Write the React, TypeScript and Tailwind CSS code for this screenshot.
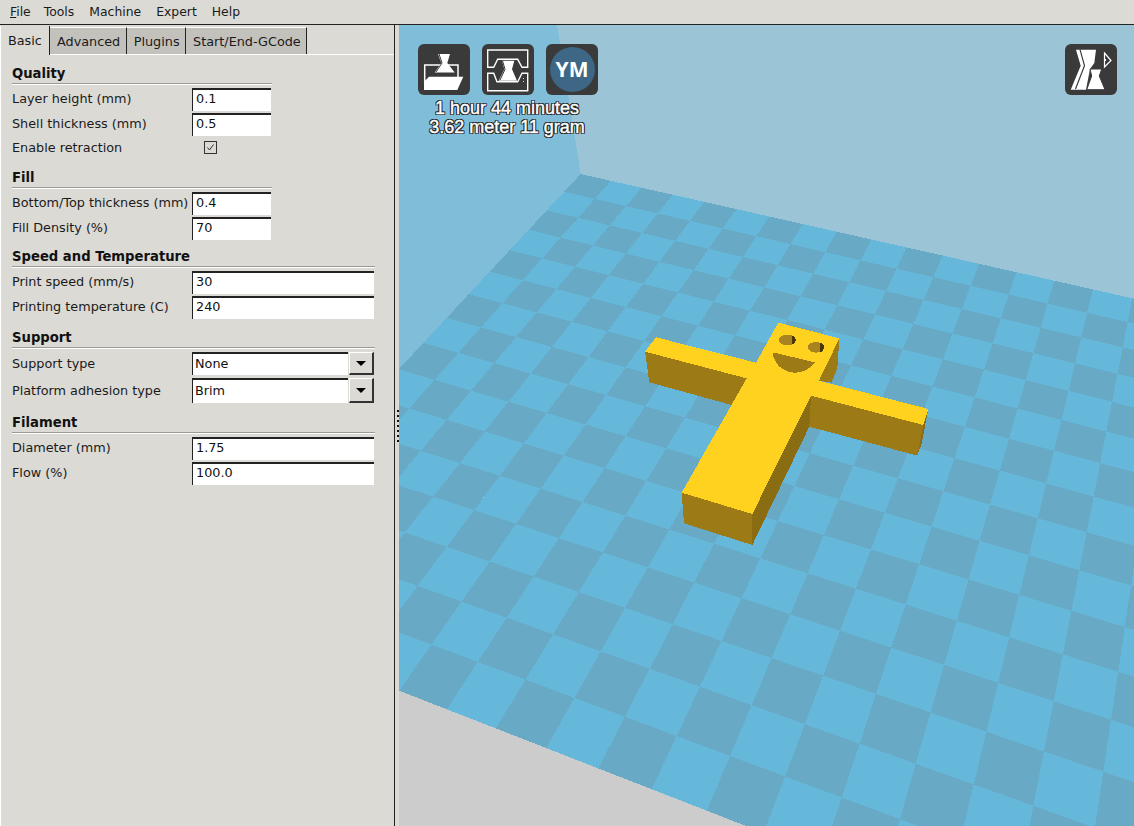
import React from 'react';

// floor homography, measured off the screenshot (u along the back edge, v towards the viewer)
function project(u: number, v: number) {
  const w = 1 - 0.008367 * u - 0.02221 * v;
  return [(25.001 * u - 29.07 * v + 580.7) / w, (5.273 * u + 13.5 * v + 174) / w];
}

function cellPoints(u: number, v: number) {
  return [project(u, v), project(u + 1, v), project(u + 1, v + 1), project(u, v + 1)]
    .map((p) => `${p[0].toFixed(1)},${p[1].toFixed(1)}`)
    .join(' ');
}

const cells: { u: number; v: number }[] = [];
for (let v = 0; v < 16; v++) {
  for (let u = 0; u < 26; u++) {
    cells.push({ u, v });
  }
}

function Viewport() {
  return (
    <svg className="absolute inset-0 h-full w-full" viewBox="399 25 735 801" shapeRendering="crispEdges">
      <rect x="399" y="25" width="735" height="801" fill="#cccccc" />
      <polygon points="557,25 1134,25 1134,300 580.7,174" fill="#9bc4d7" />
      <polygon points="399,25 557,25 580.7,174 399,372" fill="#80bdd9" />
      {cells.map((c) => (
        <polygon
          key={`${c.u}-${c.v}`}
          points={cellPoints(c.u, c.v)}
          fill={(c.u + c.v) % 2 === 0 ? '#68aac6' : '#66b8da'}
        />
      ))}
      {/* printed model, coordinates taken from a 3x crop */}
      <g transform="translate(630 310) scale(0.33333)">
        <polygon points="45,125 350,205 305,285 58,217" fill="#9c7a16" />
        <polygon points="628,85 622,175 605,218 567,212" fill="#9c7a16" />
        <polygon points="543,257 880,345 862,437 538,350" fill="#9c7a16" />
        <polygon points="895,297 880,345 862,437 875,400" fill="#8a6c13" />
        <polygon points="155,548 367,612 367,705 162,640" fill="#9c7a16" />
        <polygon points="367,612 543,257 538,350 367,705" fill="#8a6c13" />
        <polygon
          points="445,38 628,85 567,212 895,297 880,345 543,257 367,612 155,548 350,205 45,125 78,82 378,158"
          fill="#ffd21f"
        />
        <ellipse cx="472" cy="90" rx="25" ry="16" fill="#a98320" />
        <path d="M487 77 Q497 80 497 90 Q497 100 487 103 Z" fill="#4a3808" />
        <ellipse cx="558" cy="112" rx="24" ry="16" fill="#a98320" />
        <path d="M571 98 Q582 102 582 112 Q582 122 571 127 Z" fill="#4a3808" />
        <path d="M428 127 L555 157 Q530 190 490 188 Q435 180 428 127 Z" fill="#9c7a16" />
      </g>
    </svg>
  );
}

function IconBox({ children }: { children: React.ReactNode }) {
  return <div className="h-[51px] w-[52px] overflow-hidden rounded-[6px] bg-[#3a3a3a]">{children}</div>;
}

function LoadIcon() {
  return (
    <svg viewBox="0 0 52 51" className="h-full w-full">
      <path d="M6.700 38V21H40V33" fill="none" stroke="#fff" strokeWidth="1.5" />
      <polygon points="20,10 32,10 29.300,19 36.700,28.500 16.700,28.500 23.300,19" fill="#fff" />
      <path d="M21 10 L24 19 L18 28" fill="none" stroke="#3a3a3a" strokeWidth="1" />
      <polygon points="11,32.700 45.300,32.700 39.300,46 6,46 6,37.700" fill="#fff" />
    </svg>
  );
}

function LayerIcon() {
  return (
    <svg viewBox="0 0 52 51" className="h-full w-full">
      <path d="M5.700 23.300V6H45.700V23.300H40L35.700 15.300H15.700L11.700 23.300Z" fill="none" stroke="#fff" strokeWidth="1.4" />
      <path d="M5.700 29.300H11.700L15 37.700H35.700L40 29.300H45.700V46.700H5.700Z" fill="none" stroke="#fff" strokeWidth="1.4" />
      <polygon points="20,16.700 32.300,16.700 30,25.300 35,36.700 16.700,36.700 22.300,25.300" fill="#fff" />
      <path d="M20.500 16.700 L23 25.300 L18 36" fill="none" stroke="#3a3a3a" strokeWidth="1" />
      <rect x="41" y="34" width="1" height="1" fill="#ddd" />
      <rect x="41" y="37" width="1" height="1" fill="#ddd" />
    </svg>
  );
}

function MirrorIcon() {
  return (
    <svg viewBox="0 0 52 51" className="h-full w-full">
      <polygon points="11,5.700 31,5.700 29.300,19 25,25 21,45.700 5.700,45.700 15.700,21.700" fill="#fff" />
      <path d="M15 5.700 L19.500 21.700 L10.500 45" fill="none" stroke="#3a3a3a" strokeWidth="1.2" />
      <polygon points="25,25 36.700,25 34.300,32 40,45.700 21.700,45.700 26.700,32" fill="#fff" stroke="#3a3a3a" strokeWidth="1" />
      <path d="M39.500 9L46 16.500L39.500 23Z" fill="none" stroke="#fff" strokeWidth="1.2" />
      <rect x="39" y="15" width="2" height="2" fill="#fff" />
    </svg>
  );
}

function TextInput({ value, wide }: { value: string; wide?: boolean }) {
  return (
    <div
      className={`h-[23px] border-t-2 border-l border-[#222222] bg-white pl-[3px] text-[12.8px] leading-[17px] text-[#111111] ${
        wide ? 'w-[182px]' : 'w-[79px]'
      }`}
    >
      {value}
    </div>
  );
}

function ComboInput({ value, tall }: { value: string; tall?: boolean }) {
  return (
    <div className={`flex w-[182px] ${tall ? 'h-[25px]' : 'h-[23px]'}`}>
      <div
        className={`w-[156px] border-t-2 border-l border-[#222222] bg-white pl-[2px] text-[12.8px] text-[#111111] ${
          tall ? 'leading-[21px]' : 'leading-[19px]'
        }`}
      >
        {value}
      </div>
      <div className="ml-[1px] flex w-[25px] items-center justify-center border-t border-l border-white border-r-2 border-b-2 border-r-[#333333] border-b-[#333333] bg-[#dcdad5]">
        <div className="h-0 w-0 border-x-[5px] border-t-[5px] border-x-transparent border-t-black" />
      </div>
    </div>
  );
}

function Row({
  label,
  children,
  gap,
  flat,
}: {
  label: string;
  children: React.ReactNode;
  gap?: string;
  flat?: boolean;
}) {
  return (
    <div className={`flex items-center text-[12.8px] text-[#1a1a1a] ${gap ?? ''}`}>
      <div className={`w-[180px] whitespace-nowrap ${flat ? '' : 'pb-[2px]'}`}>{label}</div>
      {children}
    </div>
  );
}

function Section({
  title,
  wide,
  className,
  children,
}: {
  title: string;
  wide?: boolean;
  className?: string;
  children: React.ReactNode;
}) {
  return (
    <div className={`${wide ? 'w-[363px]' : 'w-[260px]'} ${className ?? ''}`}>
      <div className="h-[18px] text-[13.2px] font-bold leading-[17px] text-[#111111]">{title}</div>
      <div className="mb-[3px] h-[2px] border-t border-b border-t-[#9a9994] border-b-white" />
      {children}
    </div>
  );
}

const menus = ['Tools', 'Machine', 'Expert', 'Help'];
const tabs = ['Advanced', 'Plugins', 'Start/End-GCode'];
const sashDots = [0, 1, 2, 3, 4, 5, 6];

export default function App() {
  return (
    <div className="flex h-screen w-full flex-col overflow-hidden bg-[#dcdad5] font-['DejaVu_Sans',sans-serif]">
      <div className="flex h-[25px] shrink-0 items-center gap-[15px] border-b border-[#222222] pl-[10px] text-[12.4px] text-[#1a1a1a]">
        <span className="mr-[-2px]">
          <span className="underline">F</span>ile
        </span>
        {menus.map((m) => (
          <span key={m}>{m}</span>
        ))}
      </div>

      <div className="flex min-h-0 flex-1">
        <div className="flex w-[395px] shrink-0 flex-col border-r border-[#222222]">
          <div className="mt-[1px] flex h-[29px] shrink-0 border-b border-white text-[12.8px] text-[#1a1a1a]">
            <div className="h-[29px] w-[50px] border-l border-r border-l-white border-r-[#222222] bg-[#dcdad5] pl-[7px] leading-[29px]">
              Basic
            </div>
            {tabs.map((t) => (
              <div
                key={t}
                className="mt-[1px] border-t border-r border-t-white border-r-[#222222] bg-[#c3c1bc] pl-[7px] pr-[5.5px] leading-[27px]"
              >
                {t}
              </div>
            ))}
          </div>

          <div className="flex-1 border-l border-white pl-[11px] pt-[10px]">
            <Section title="Quality">
              <Row label="Layer height (mm)">
                <TextInput value="0.1" />
              </Row>
              <Row label="Shell thickness (mm)" gap="mt-[2px]">
                <TextInput value="0.5" />
              </Row>
              <Row label="Enable retraction" gap="mt-[2px]" flat>
                <div className="my-[3px] ml-[12px] flex h-[13px] w-[13px] items-center justify-center border border-[#333333]">
                  <svg viewBox="0 0 11 11" className="h-[11px] w-[11px]">
                    <path d="M2.500 5.500L4.500 8L8.500 2.500" fill="none" stroke="#333333" strokeWidth="1" />
                  </svg>
                </div>
              </Row>
            </Section>

            <Section title="Fill" className="mt-[12px]">
              <Row label="Bottom/Top thickness (mm)">
                <TextInput value="0.4" />
              </Row>
              <Row label="Fill Density (%)" gap="mt-[2px]">
                <TextInput value="70" />
              </Row>
            </Section>

            <Section title="Speed and Temperature" wide className="mt-[8px]">
              <Row label="Print speed (mm/s)">
                <TextInput value="30" wide />
              </Row>
              <Row label="Printing temperature (C)" gap="mt-[2px]">
                <TextInput value="240" wide />
              </Row>
            </Section>

            <Section title="Support" wide className="mt-[10px]">
              <Row label="Support type" flat>
                <ComboInput value="None" />
              </Row>
              <Row label="Platform adhesion type" gap="mt-[3px]" flat>
                <ComboInput value="Brim" tall />
              </Row>
            </Section>

            <Section title="Filament" wide className="mt-[11px]">
              <Row label="Diameter (mm)">
                <TextInput value="1.75" wide />
              </Row>
              <Row label="Flow (%)" gap="mt-[2px]">
                <TextInput value="100.0" wide />
              </Row>
            </Section>
          </div>
        </div>

        {/* sash */}
        <div className="flex w-[4px] shrink-0 flex-col items-end justify-center gap-[3px]">
          {sashDots.map((d) => (
            <div key={d} className="h-[2px] w-[2px] bg-[#111111]" />
          ))}
        </div>

        <div className="relative flex-1 overflow-hidden">
          <Viewport />

          <div className="absolute left-[19px] top-[19px] flex flex-col">
            <div className="flex gap-[12px]">
              <IconBox>
                <LoadIcon />
              </IconBox>
              <IconBox>
                <LayerIcon />
              </IconBox>
              <IconBox>
                <div className="flex h-full items-center justify-center">
                  <div className="flex h-[45px] w-[45px] items-center justify-center rounded-full bg-[#3d6785] font-['Open_Sans',sans-serif] text-[21px] font-bold text-white">
                    YM
                  </div>
                </div>
              </IconBox>
            </div>
            <div className="mt-[4px] pr-[2px] text-center font-['Liberation_Sans',sans-serif] text-[18px] leading-[19px] text-white [-webkit-text-stroke:0.4px_white] [text-shadow:1px_0_0_#222,-1px_0_0_#222,0_1px_0_#222,0_-1px_0_#222,1px_1px_0_#222,-1px_-1px_0_#222,1px_-1px_0_#222,-1px_1px_0_#222]">
              <div>1 hour 44 minutes</div>
              <div>3.62 meter 11 gram</div>
            </div>
          </div>

          <div className="absolute right-[17px] top-[19px]">
            <IconBox>
              <MirrorIcon />
            </IconBox>
          </div>
        </div>
      </div>
    </div>
  );
}
